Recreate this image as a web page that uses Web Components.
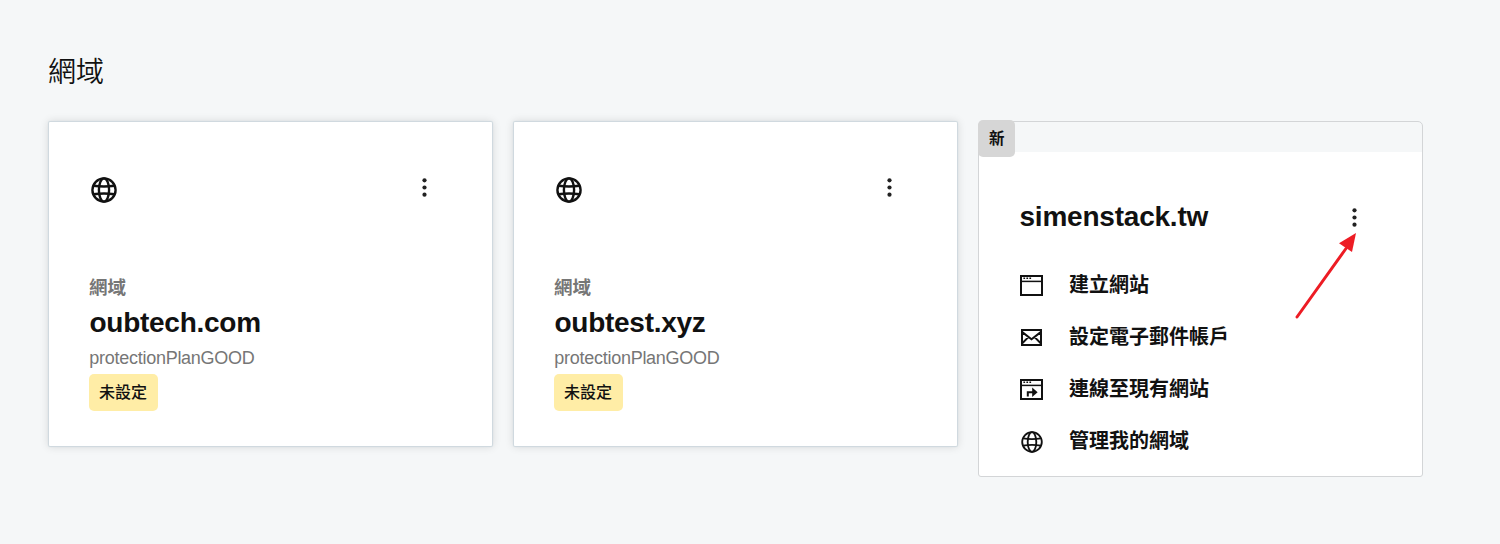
<!DOCTYPE html>
<html lang="zh-Hant">
<head>
<meta charset="utf-8">
<title>網域</title>
<style>
html,body{margin:0;background:#f5f7f8}
body{font-family:"Liberation Sans","Noto Sans CJK TC",sans-serif;color:#111}
</style>
</head>
<body>
<domain-page></domain-page>
<script>
const globe = `<circle cx="12" cy="12" r="10.7"/><ellipse cx="12" cy="12" rx="4.7" ry="10.7"/><path d="M2.2 8.1Q12 9.5 21.8 8.1M2.2 15.9Q12 14.5 21.8 15.9"/>`;
const dots = `<path d="M4.4 5.3h1.7M7.4 5.3h1.7M10.4 5.3h1.7" stroke-width="1.6"/>`;
const frame = `<path d="M2 3h21v19h-21z"/><path d="M2 8.4h21" stroke-width="1.5"/>`;
const ICONS = {
  globe,
  window: frame + dots,
  mail: `<path d="M3 5h19v15h-19zM3.3 7.1l9.2 7.2 9.2-7.2M3.3 18.2l5.8-5.8M21.7 18.2l-5.8-5.8"/>`,
  connect: frame + dots + `<path d="M8.8 19.5v-4.3h6"/><path d="M13.2 10.4l5.4 4.8-5.4 4.8z" fill="#111" stroke="none"/>`
};
function define(name, css, html){
  customElements.define(name, class extends HTMLElement {
    constructor(){
      super();
      this.attachShadow({mode:'open'}).innerHTML = `<style>${css}</style>` + (typeof html === 'function' ? html(this) : html);
    }
  });
}
define('line-icon', `:host{display:block;width:24px;height:24px;flex:none}svg{display:block;width:100%;height:100%;overflow:visible}`,
  el => `<svg viewBox="0 0 24 24" fill="none" stroke="#111" stroke-width="${el.getAttribute('stroke') || 2}">${ICONS[el.getAttribute('name')]}</svg>`);
define('more-button', `:host{display:block;width:6px;height:22px}svg{display:block}`,
  `<svg width="6" height="22" viewBox="0 0 6 22" fill="#222"><circle cx="3.5" cy="3.3" r="2.1"/><circle cx="3.5" cy="10.5" r="2.1"/><circle cx="3.5" cy="17.7" r="2.1"/></svg>`);
define('status-badge', `:host{display:block;width:69px;height:37px;box-sizing:border-box;padding-left:10px;border-radius:5px;background:#ffeda6;font-size:16px;line-height:37px;font-weight:500}
:host([new]){width:37px;padding-left:11px;background:#d6d6d6;font-size:15.5px;line-height:38px;font-weight:700}`, `<slot></slot>`);
define('domain-card', `:host{display:block;box-sizing:border-box;width:443px;height:324px;margin:1px;padding:55px 40px 0;background:#fff;border-radius:1px;box-shadow:0 0 1px 1px #ced8de,0 0 8px 1px rgba(0,0,0,.12)}
.top{display:flex;justify-content:space-between;align-items:flex-start;padding:0 25px 0 2px;height:98px}
line-icon{width:26px;height:26px}
.kind{font-size:18.5px;line-height:26px;font-weight:700;color:#767676}
h2{margin:4px 0 0;padding-left:.5px;font-size:28px;line-height:36px;font-weight:700;letter-spacing:-.27px}
.plan{font-size:18px;line-height:32px;height:32px;margin-top:1px;padding-left:.3px;color:#767676;letter-spacing:-.27px}`,
  `<div class="top"><line-icon name="globe" stroke="2.2"></line-icon><more-button></more-button></div>
<div class="kind">網域</div><h2><slot name="name"></slot></h2><div class="plan"><slot name="plan"></slot></div><slot></slot>`);
define('menu-item', `:host{display:flex;align-items:center;height:52px;gap:26px;font-size:20px;line-height:30px;font-weight:700}
line-icon[name=globe]{width:22px;height:22px;margin:1px .5px 0 1.5px}`,
  el => `<line-icon name="${el.getAttribute('icon')}"></line-icon><span><slot></slot></span>`);
define('new-domain-card', `:host{display:block;position:relative;box-sizing:border-box;width:445px;height:356px;border:1px solid #d3d5d7;border-radius:5px 5px 3px 3px;background:linear-gradient(#f5f7f8 30px,#fff 30px);padding:77px 40px 0}
status-badge{position:absolute;left:-1px;top:-2px}
.top{display:flex;justify-content:space-between;padding-right:25px;height:60px}
h2{margin:0;padding-left:.5px;font-size:28px;line-height:36px;font-weight:700;letter-spacing:-.22px}
more-button{margin-top:8px}
svg{position:absolute;left:315px;top:109px;overflow:visible}`,
  `<status-badge new>新</status-badge><div class="top"><h2><slot name="name"></slot></h2><more-button></more-button></div>
<slot></slot>
<svg width="64" height="90" viewBox="0 0 64 90"><path d="M3 86L52 17.5" stroke="#ed1c24" stroke-width="3" stroke-linecap="round"/><path d="M62 2L45 12.3l13 8.7z" fill="#ed1c24"/></svg>`);
define('domain-page', `:host{display:block;box-sizing:border-box;height:544px;padding:52px 48px 0}
h1{margin:0;font-size:28px;line-height:42px;height:69px;font-weight:350;font-family:"Liberation Sans","Noto Sans CJK TC DemiLight","Noto Sans CJK TC",sans-serif}
.cards{display:flex;gap:20px;align-items:flex-start}`,
`<h1>網域</h1><div class="cards">
<domain-card><span slot="name">oubtech.com</span><span slot="plan">protectionPlanGOOD</span><status-badge>未設定</status-badge></domain-card>
<domain-card><span slot="name">oubtest.xyz</span><span slot="plan">protectionPlanGOOD</span><status-badge>未設定</status-badge></domain-card>
<new-domain-card><span slot="name">simenstack.tw</span><menu-item icon="window">建立網站</menu-item><menu-item icon="mail">設定電子郵件帳戶</menu-item><menu-item icon="connect">連線至現有網站</menu-item><menu-item icon="globe">管理我的網域</menu-item></new-domain-card>
</div>`);
</script>
</body>
</html>
